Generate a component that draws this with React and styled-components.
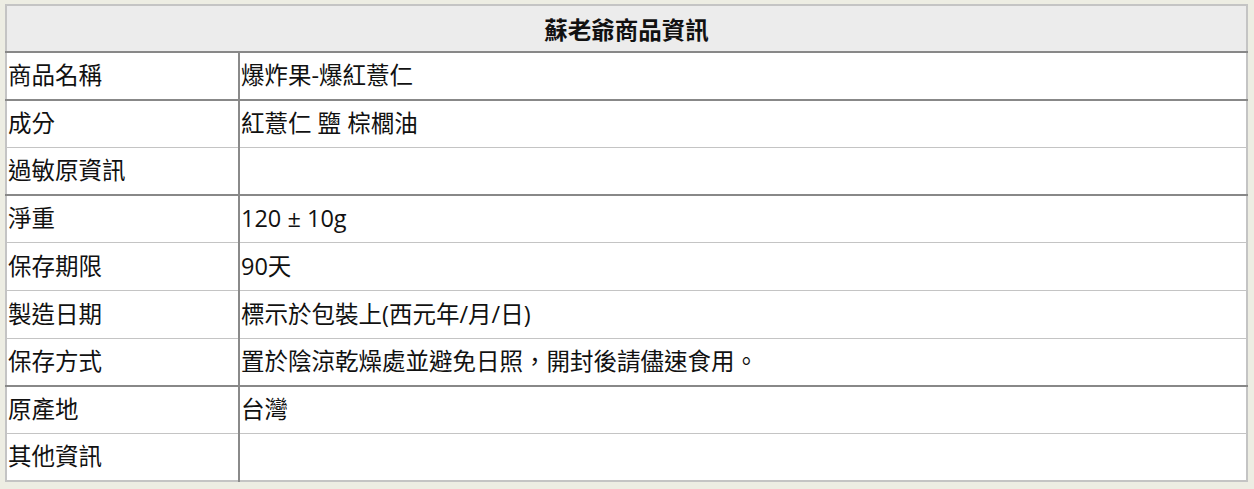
import React from "react";
import styled, { createGlobalStyle } from "styled-components";

const Global = createGlobalStyle`
  html, body { margin: 0; padding: 0; background: #ededE3; }
  body { padding: 4px 7px 0 5px; }
`;

const Table = styled.table`
  width: 1243px;
  border-collapse: collapse;
  background: #fff;
  font-family: "Open Sans", "Noto Sans CJK TC", sans-serif;
  font-size: 23.5px;
  color: #111;
  border: 2px solid #c4c4c4;
`;

const HeadCell = styled.th`
  background: #ececec;
  height: 45px;
  padding: 0;
  font-weight: 700;
  text-align: center;
  border-bottom: 2px solid #888;
`;

const Row = styled.tr`
  height: 47.7px;
`;

const Cell = styled.td`
  padding: 0 0 0 1px;
  vertical-align: middle;
  border: 1px solid #bdbdbd;
  border-bottom: ${(p) => (p.$dark ? "2px solid #888" : "1px solid #c4c4c4")};
  border-right: ${(p) => (p.$label ? "2px solid #8a8a8a" : "1px solid #c4c4c4")};
  width: ${(p) => (p.$label ? "230px" : "auto")};
  line-height: 1;
`;

const rows = [
  ["商品名稱", "爆炸果-爆紅薏仁", true],
  ["成分", "紅薏仁 鹽 棕櫚油", false],
  ["過敏原資訊", "", true],
  ["淨重", "120 ± 10g", false],
  ["保存期限", "90天", false],
  ["製造日期", "標示於包裝上(西元年/月/日)", false],
  ["保存方式", "置於陰涼乾燥處並避免日照，開封後請儘速食用。", true],
  ["原產地", "台灣", false],
  ["其他資訊", "", false],
];

export default function App() {
  return (
    <>
      <Global />
      <Table>
        <thead>
          <tr>
            <HeadCell colSpan={2}>蘇老爺商品資訊</HeadCell>
          </tr>
        </thead>
        <tbody>
          {rows.map(([k, v, dark]) => (
            <Row key={k}>
              <Cell $label $dark={dark}>{k}</Cell>
              <Cell $dark={dark}>{v}</Cell>
            </Row>
          ))}
        </tbody>
      </Table>
    </>
  );
}
